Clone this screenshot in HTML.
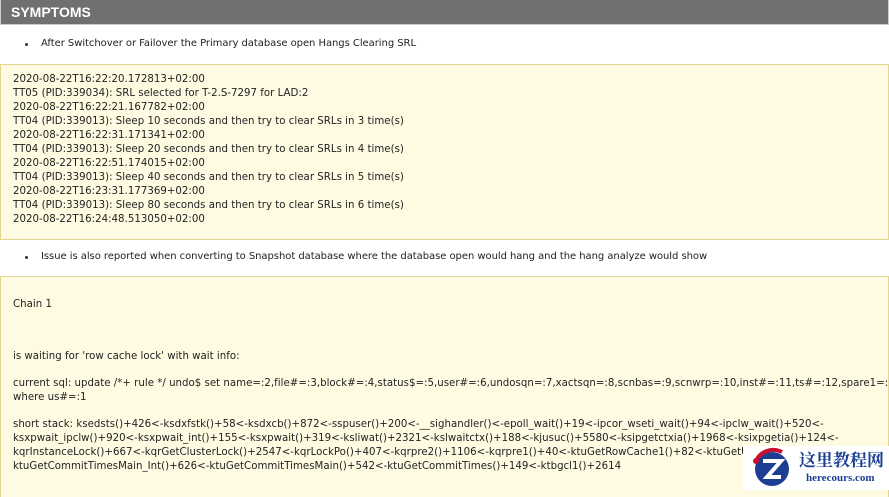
<!DOCTYPE html>
<html><head><style>
body{margin:0;width:889px;height:490px;overflow:hidden;background:#fff;font-family:"DejaVu Sans",Verdana,sans-serif;font-size:10.2px;color:#222;letter-spacing:0.02px}
.hd{position:absolute;left:0;top:0;width:887px;height:24px;background:#707070;border:1px solid #ccc;border-top:none}
.hd span{position:absolute;left:10px;top:4px;color:#fff;font-family:"Liberation Sans",Arial,sans-serif;font-weight:bold;font-size:14px;letter-spacing:0}
.b{position:absolute;left:41px;white-space:nowrap;font-size:10px;letter-spacing:-0.05px}
.b:before{content:"";position:absolute;left:-16px;top:5px;width:3px;height:3px;background:#333;border-radius:50%}
.box{position:absolute;left:0;width:887px;background:#fffbe3;border:1px solid #e2d592}
.l{position:absolute;left:12px;white-space:nowrap;line-height:14px}
</style></head><body>
<div class="hd"><span>SYMPTOMS</span></div>
<div class="b" style="top:38px">After Switchover or Failover the Primary database open Hangs Clearing SRL</div>
<div class="box" style="top:64px;height:174px">
<div class="l" style="top:8px">2020-08-22T16:22:20.172813+02:00<br>TT05 (PID:339034): SRL selected for T-2.S-7297 for LAD:2<br>2020-08-22T16:22:21.167782+02:00<br>TT04 (PID:339013): Sleep 10 seconds and then try to clear SRLs in 3 time(s)<br>2020-08-22T16:22:31.171341+02:00<br>TT04 (PID:339013): Sleep 20 seconds and then try to clear SRLs in 4 time(s)<br>2020-08-22T16:22:51.174015+02:00<br>TT04 (PID:339013): Sleep 40 seconds and then try to clear SRLs in 5 time(s)<br>2020-08-22T16:23:31.177369+02:00<br>TT04 (PID:339013): Sleep 80 seconds and then try to clear SRLs in 6 time(s)<br>2020-08-22T16:24:48.513050+02:00</div>
</div>
<div class="b" style="top:251px">Issue is also reported when converting to Snapshot database where the database open would hang and the hang analyze would show</div>
<div class="box" style="top:276px;height:220px;border-bottom:none;overflow:hidden">
<div class="l" style="top:21px">Chain 1</div>
<div class="l" style="top:73px">is waiting for 'row cache lock' with wait info:</div>
<div class="l" style="top:100px">current sql: update /*+ rule */ undo$ set name=:2,file#=:3,block#=:4,status$=:5,user#=:6,undosqn=:7,xactsqn=:8,scnbas=:9,scnwrp=:10,inst#=:11,ts#=:12,spare1=:1<br>where us#=:1</div>
<div class="l" style="top:141px">short stack: ksedsts()+426&lt;-ksdxfstk()+58&lt;-ksdxcb()+872&lt;-sspuser()+200&lt;-__sighandler()&lt;-epoll_wait()+19&lt;-ipcor_wseti_wait()+94&lt;-ipclw_wait()+520&lt;-<br>ksxpwait_ipclw()+920&lt;-ksxpwait_int()+155&lt;-ksxpwait()+319&lt;-ksliwat()+2321&lt;-kslwaitctx()+188&lt;-kjusuc()+5580&lt;-ksipgetctxia()+1968&lt;-ksixpgetia()+124&lt;-<br>kqrInstanceLock()+667&lt;-kqrGetClusterLock()+2547&lt;-kqrLockPo()+407&lt;-kqrpre2()+1106&lt;-kqrpre1()+40&lt;-ktuGetRowCache1()+82&lt;-ktuGetU<br>ktuGetCommitTimesMain_Int()+626&lt;-ktuGetCommitTimesMain()+542&lt;-ktuGetCommitTimes()+149&lt;-ktbgcl1()+2614</div>
</div>
<div style="position:absolute;left:743px;top:446px;width:146px;height:44px;background:#fff"></div>
<svg style="position:absolute;left:748px;top:447px" width="48" height="42" viewBox="0 0 48 42"><circle cx="24" cy="22" r="17" fill="#1c3f94"/><path d="M8 14 A19 19 0 0 1 34 5" stroke="#c8102e" stroke-width="4" fill="none"/><circle cx="8" cy="14" r="3" fill="#c8102e"/><path d="M15 14h18l-14 16h14" stroke="#fff" stroke-width="4" fill="none"/></svg>
<div style="position:absolute;left:799px;top:449px;font-family:'Noto Serif CJK SC',serif;font-weight:bold;font-size:17px;line-height:20px;color:#1c3f94;letter-spacing:0;white-space:nowrap">这里教程网</div>
<div style="position:absolute;left:806px;top:472px;font-family:'Liberation Serif',serif;font-weight:bold;font-size:11px;color:#1c3f94;letter-spacing:0;white-space:nowrap">herecours.com</div>
</body></html>
